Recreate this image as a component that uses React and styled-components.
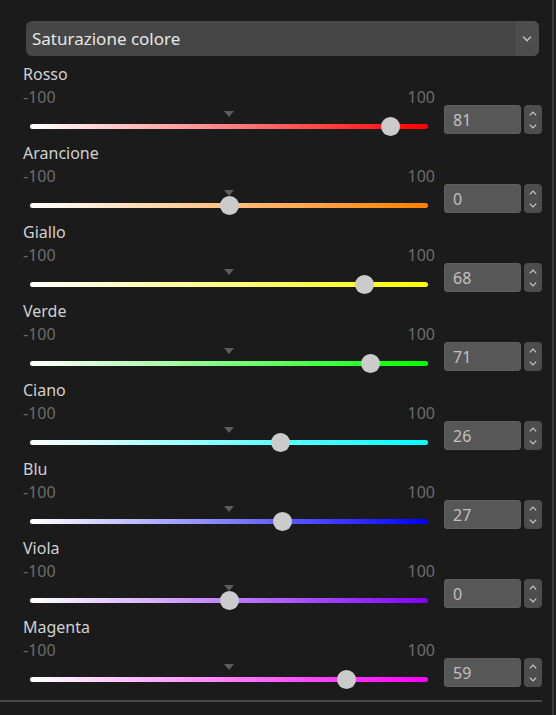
import React from "react";
import styled, { createGlobalStyle } from "styled-components";

const Global = createGlobalStyle`
  html, body { margin: 0; padding: 0; background: #1b1b1b; }
  body { font-family: "Noto Sans", "Open Sans", sans-serif; }
`;

const Screen = styled.div`
  width: 556px;
  height: 715px;
  background: #1b1b1b;
  display: flex;
  overflow: hidden;
`;

const Panel = styled.div`
  width: 552px;
  display: flex;
  flex-direction: column;
`;

const ScrollLine = styled.div`
  width: 2px;
  height: 100%;
  background: #3a3a3a;
`;

const Select = styled.div`
  margin: 21px 0 0 26px;
  width: 513px;
  height: 35px;
  box-sizing: border-box;
  border-radius: 6px;
  background: #464646;
  display: flex;
  overflow: hidden;
`;

const SelectText = styled.div`
  flex: 1;
  padding-left: 6px;
  font-size: 17px;
  line-height: 35px;
  color: #e6e6e6;
`;

const SelectArrow = styled.div`
  width: 24px;
  background: #4d4d4d;
  display: flex;
  align-items: center;
  justify-content: center;
`;

const List = styled.div`
  margin-top: 8px;
  display: flex;
  flex-direction: column;
`;

const Row = styled.div`
  height: 79px;
  display: grid;
  grid-template-columns: 412px 98px;
  column-gap: 9px;
  padding-left: 23px;
`;

const Left = styled.div`
  display: flex;
  flex-direction: column;
`;

const Name = styled.div`
  height: 22px;
  font-size: 16px;
  line-height: 20px;
  color: #d0d0d0;
`;

const Scale = styled.div`
  height: 22px;
  display: flex;
  justify-content: space-between;
  font-size: 16px;
  line-height: 22px;
  color: #6b6b6b;
`;

const SliderArea = styled.div`
  position: relative;
  height: 35px;
  margin: 0 7px;
`;

const Track = styled.div`
  position: absolute;
  left: 0;
  right: 0;
  top: 16px;
  height: 5px;
  border-radius: 3px;
  background: linear-gradient(to right, #ffffff, ${(p) => p.$color});
`;

const Marker = styled.div`
  position: absolute;
  left: calc(50% - 5px);
  top: 3px;
  width: 0;
  height: 0;
  border-left: 5px solid transparent;
  border-right: 5px solid transparent;
  border-top: 6px solid #5c5c5c;
`;

const Thumb = styled.div`
  position: absolute;
  top: 9px;
  width: 19px;
  height: 19px;
  margin-left: -9.5px;
  border-radius: 50%;
  background: #cbcbcb;
`;

const Right = styled.div`
  padding-top: 41px;
  display: flex;
  align-items: flex-start;
  gap: 3px;
`;

const Input = styled.div`
  width: 77px;
  height: 29px;
  box-sizing: border-box;
  border-radius: 3px;
  background: #575757;
  border: 1px solid #5e5e5e;
  padding-left: 8px;
  font-size: 16px;
  line-height: 28px;
  color: #c0c0c0;
`;

const Spin = styled.div`
  width: 18px;
  height: 29px;
  border-radius: 4px;
  background: #4d4d4d;
  display: flex;
  flex-direction: column;
  align-items: center;
  justify-content: center;
  gap: 8px;
`;

const BottomRule = styled.div`
  margin-top: 4px;
  width: 542px;
  height: 2px;
  background: #4a4a4a;
`;

const Chevron = ({ up, w = 8, h = 5, c = "#c8c8c8" }) => (
  <svg width={w} height={h} viewBox="0 0 8 5" fill="none" style={{ display: "block" }}>
    <path
      d={up ? "M0.8 4.3 L4 1 L7.2 4.3" : "M0.8 0.7 L4 4 L7.2 0.7"}
      stroke={c}
      strokeWidth="1.2"
    />
  </svg>
);

const channels = [
  { name: "Rosso", color: "#ff0000", value: 81 },
  { name: "Arancione", color: "#ff8000", value: 0 },
  { name: "Giallo", color: "#ffff00", value: 68 },
  { name: "Verde", color: "#00ff00", value: 71 },
  { name: "Ciano", color: "#00ffff", value: 26 },
  { name: "Blu", color: "#0000ff", value: 27 },
  { name: "Viola", color: "#8000ff", value: 0 },
  { name: "Magenta", color: "#ff00ff", value: 59 },
];

export default function App() {
  return (
    <>
      <Global />
      <Screen>
        <Panel>
          <Select>
            <SelectText>Saturazione colore</SelectText>
            <SelectArrow>
              <Chevron w={10} h={6} c="#c4c4c4" />
            </SelectArrow>
          </Select>
          <List>
            {channels.map((ch) => (
              <Row key={ch.name}>
                <Left>
                  <Name>{ch.name}</Name>
                  <Scale>
                    <span>-100</span>
                    <span>100</span>
                  </Scale>
                  <SliderArea>
                    <Track $color={ch.color} />
                    <Marker />
                    <Thumb style={{ left: `${50 + ch.value / 2}%` }} />
                  </SliderArea>
                </Left>
                <Right>
                  <Input>{ch.value}</Input>
                  <Spin>
                    <Chevron up />
                    <Chevron />
                  </Spin>
                </Right>
              </Row>
            ))}
          </List>
          <BottomRule />
        </Panel>
        <ScrollLine />
      </Screen>
    </>
  );
}
